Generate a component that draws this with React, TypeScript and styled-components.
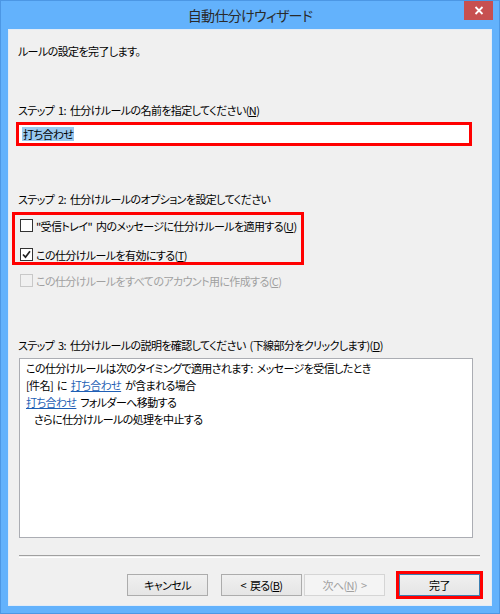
import React from 'react';
import styled, { createGlobalStyle } from 'styled-components';

// == styles =======================================================================================
const GlobalStyle = createGlobalStyle`
  html, body {
    margin: 0;
    padding: 0;
    background: #ffffff;
  }
  body {
    font-family: "Noto Sans CJK JP", "Noto Sans", sans-serif;
    font-feature-settings: "palt";
    font-size: 11px;
    letter-spacing: -0.6px;
    word-spacing: 2px;
    color: #000000;
  }
`;

const Window = styled.div`
  box-sizing: border-box;
  width: 500px;
  height: 614px;
  display: flex;
  flex-direction: column;
  background: #63b2fc;
  border: 1px solid #4c97e4;
`;

const TitleBar = styled.div`
  height: 28px;
  flex: none;
  display: grid;
  grid-template-columns: 1fr auto 1fr;
  align-items: start;
`;

const Title = styled.div`
  grid-column: 2;
  padding-top: 4px;
  font-size: 14px;
  line-height: 20px;
  letter-spacing: -0.7px;
  color: #2a2a2a;
`;

const CloseButton = styled.div`
  grid-column: 3;
  justify-self: end;
  margin-right: 6px;
  width: 29px;
  height: 19px;
  display: flex;
  align-items: center;
  justify-content: center;
  background: #c75050;
`;

const Panel = styled.div`
  flex: 1;
  margin: 0 7px 7px 7px;
  box-sizing: border-box;
  background: #f0f0f0;
  border: 1px solid #e2ecf7;
  padding: 13px 0 0 9px;
  display: flex;
  flex-direction: column;
`;

const Label = styled.div<{ gap?: number; disabled?: boolean }>`
  line-height: 17px;
  margin-top: ${ ( { gap } ) => gap ?? 0 }px;
  white-space: nowrap;
  color: ${ ( { disabled } ) => ( disabled ? '#a0a0a0' : '#000000' ) };
`;

const NameBox = styled.div`
  box-sizing: border-box;
  margin: 3px 0 0 -2px;
  width: 456px;
  height: 24px;
  border: 3px solid #ff0000;
  background: #ffffff;
  display: flex;
  align-items: center;
  padding-left: 3px;
`;

const Selected = styled.span`
  background: #99c9ef;
  line-height: 14px;
  padding: 0 1px;
`;

const Highlight = styled.div`
  box-sizing: border-box;
  margin: 4px 0 0 -6px;
  width: 292px;
  height: 53px;
  border: 3px solid #ff0000;
  padding: 3px 0 0 5px;
  display: flex;
  flex-direction: column;
  gap: 14px;
`;

const CheckRow = styled.div<{ indent?: number; gap?: number; disabled?: boolean }>`
  display: flex;
  align-items: center;
  gap: 3px;
  height: 15px;
  margin-left: ${ ( { indent } ) => indent ?? 0 }px;
  margin-top: ${ ( { gap } ) => gap ?? 0 }px;
  white-space: nowrap;
  color: ${ ( { disabled } ) => ( disabled ? '#a0a0a0' : '#000000' ) };
`;

const Box = styled.span<{ disabled?: boolean }>`
  box-sizing: border-box;
  width: 13px;
  height: 13px;
  flex: none;
  display: flex;
  align-items: center;
  justify-content: center;
  border: 1px solid ${ ( { disabled } ) => ( disabled ? '#c8c8c8' : '#333333' ) };
  background: ${ ( { disabled } ) => ( disabled ? '#f0f0f0' : '#ffffff' ) };
`;

const Description = styled.div`
  box-sizing: border-box;
  margin: 4px 0 0 1px;
  width: 454px;
  height: 180px;
  border: 1px solid #abadb3;
  background: #ffffff;
  padding: 1px 0 0 6px;
  line-height: 17px;
`;

const DescLine = styled.div<{ indent?: number }>`
  padding-left: ${ ( { indent } ) => indent ?? 0 }px;
  white-space: nowrap;
`;

const Link = styled.span`
  color: #1f5fb5;
  text-decoration: underline;
`;

const Separator = styled.div`
  margin: 17px 0 0 1px;
  width: 461px;
  height: 1px;
  border-top: 1px solid #a0a0a0;
  border-bottom: 1px solid #ffffff;
`;

const ButtonRow = styled.div`
  margin-top: 13px;
  padding-right: 8px;
  display: flex;
  justify-content: flex-end;
  align-items: center;
`;

const Button = styled.div<{ disabled?: boolean; primary?: boolean; gap?: number }>`
  box-sizing: border-box;
  width: 81px;
  height: 22px;
  margin-left: ${ ( { gap } ) => gap ?? 0 }px;
  display: flex;
  align-items: center;
  justify-content: center;
  white-space: pre;
  color: ${ ( { disabled } ) => ( disabled ? '#a0a0a0' : '#000000' ) };
  border: 1px solid ${ ( { disabled, primary } ) => ( disabled ? '#d5d5d5' : primary ? '#3c7fb1' : '#acacac' ) };
  background: ${ ( { disabled } ) => ( disabled ? '#f4f4f4' : 'linear-gradient(#f0f0f0, #e5e5e5)' ) };
`;

const ButtonMark = styled.div`
  margin-left: 11px;
  border: 3px solid #ff0000;
  display: flex;
`;

// == element ======================================================================================
const Check = (): JSX.Element => (
  <svg width="9" height="9" viewBox="0 0 9 9">
    <path d="M1 4.5 L3.5 7.2 L8 1.2" fill="none" stroke="#222" strokeWidth="1.7" />
  </svg>
);

export default function App(): JSX.Element {
  return (
    <>
      <GlobalStyle />
      <Window>
        <TitleBar>
          <Title>自動仕分けウィザード</Title>
          <CloseButton>
            <svg width="10" height="9" viewBox="0 0 10 9">
              <path d="M1.5 1 L8.5 8 M8.5 1 L1.5 8" stroke="#ffffff" strokeWidth="1.8" />
            </svg>
          </CloseButton>
        </TitleBar>
        <Panel>
          <Label>ルールの設定を完了します。</Label>

          <Label gap={ 42 }>ステップ 1: 仕分けルールの名前を指定してください(<u>N</u>)</Label>
          <NameBox>
            <Selected>打ち合わせ</Selected>
          </NameBox>

          <Label gap={ 45 }>ステップ 2: 仕分けルールのオプションを設定してください</Label>
          <Highlight>
            <CheckRow>
              <Box />
              <span>"受信トレイ" 内のメッセージに仕分けルールを適用する(<u>U</u>)</span>
            </CheckRow>
            <CheckRow>
              <Box><Check /></Box>
              <span>この仕分けルールを有効にする(<u>T</u>)</span>
            </CheckRow>
          </Highlight>
          <CheckRow indent={ 2 } gap={ 8 } disabled>
            <Box disabled />
            <span>この仕分けルールをすべてのアカウント用に作成する(<u>C</u>)</span>
          </CheckRow>

          <Label gap={ 49 }>ステップ 3: 仕分けルールの説明を確認してください (下線部分をクリックします)(<u>D</u>)</Label>
          <Description>
            <DescLine>この仕分けルールは次のタイミングで適用されます: メッセージを受信したとき</DescLine>
            <DescLine>[件名] に <Link>打ち合わせ</Link> が含まれる場合</DescLine>
            <DescLine><Link>打ち合わせ</Link> フォルダーへ移動する</DescLine>
            <DescLine indent={ 8 }>さらに仕分けルールの処理を中止する</DescLine>
          </Description>

          <Separator />

          <ButtonRow>
            <Button>キャンセル</Button>
            <Button gap={ 13 }>&lt; 戻る(<u>B</u>)</Button>
            <Button gap={ 2 } disabled>次へ(<u>N</u>) &gt;</Button>
            <ButtonMark>
              <Button primary>完了</Button>
            </ButtonMark>
          </ButtonRow>
        </Panel>
      </Window>
    </>
  );
}
